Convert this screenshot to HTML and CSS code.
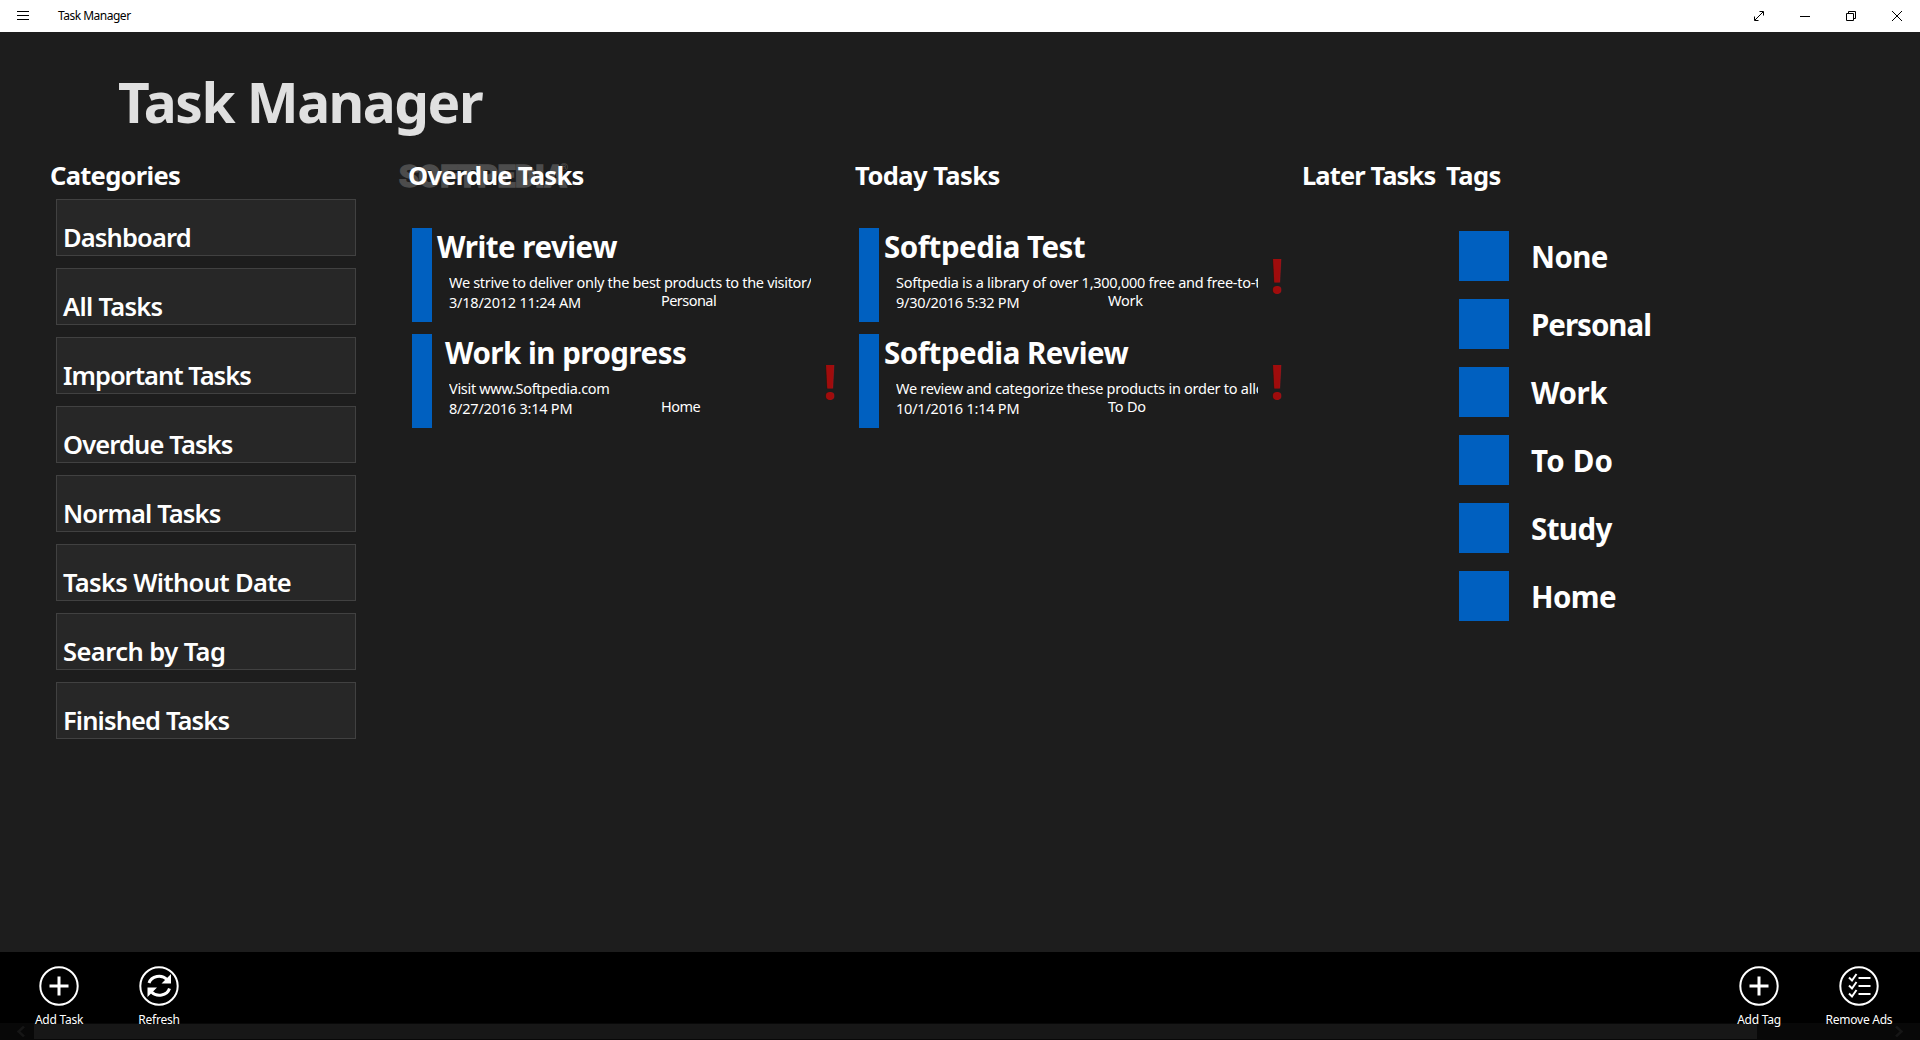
FILE: index.html
```html
<!DOCTYPE html>
<html lang="en">
<head>
<meta charset="utf-8">
<title>Task Manager</title>
<link rel="stylesheet" href="styles.css">
</head>
<body>
<header class="titlebar">
  <svg class="menu-icon" width="12" height="9" viewBox="0 0 12 9"><path d="M0 .5h12M0 4.5h12M0 8.5h12" stroke="#000" fill="none"/></svg>
  <span class="app-name">Task Manager</span>
  <div class="window-buttons">
    <svg width="10" height="10" viewBox="0 0 10 10"><path d="M.9 9.1 9.1.9M5.5.5h4v4M.5 5.5v4h4" stroke="#000" fill="none"/></svg>
    <svg width="10" height="10" viewBox="0 0 10 10"><path d="M0 5.5h10" stroke="#000"/></svg>
    <svg width="10" height="10" viewBox="0 0 10 10"><path d="M.5 2.5h7v7h-7zM2.5 2.5v-2h7v7h-2" stroke="#000" fill="none"/></svg>
    <svg width="10" height="10" viewBox="0 0 10 10"><path d="M0 0l10 10M10 0 0 10" stroke="#000"/></svg>
  </div>
</header>
<main class="page">
  <h1 class="page-title">Task Manager</h1>
  <div class="columns">
    <section class="categories">
      <h2 class="heading">Categories</h2>
      <nav class="category-list">
        <a class="category">Dashboard</a>
        <a class="category">All Tasks</a>
        <a class="category">Important Tasks</a>
        <a class="category">Overdue Tasks</a>
        <a class="category">Normal Tasks</a>
        <a class="category">Tasks Without Date</a>
        <a class="category">Search by Tag</a>
        <a class="category">Finished Tasks</a>
      </nav>
    </section>
    <section class="tasks">
      <span class="watermark">SOFTPEDIA<sup class="reg">®</sup></span>
      <h2 class="heading">Overdue Tasks</h2>
      <div class="task-list">
        <article class="task"><div class="task-body"><h3 class="task-title">Write review</h3><p class="task-note">We strive to deliver only the best products to the visitor/user</p><div class="task-meta"><span class="date">3/18/2012 11:24 AM</span><span class="tag-name">Personal</span></div></div></article>
        <article class="task"><div class="task-body"><h3 class="task-title shifted">Work in progress</h3><p class="task-note">Visit www.Softpedia.com</p><div class="task-meta"><span class="date">8/27/2016 3:14 PM</span><span class="tag-name">Home</span></div></div><span class="important">!</span></article>
      </div>
    </section>
    <section class="tasks today">
      <h2 class="heading">Today Tasks</h2>
      <div class="task-list">
        <article class="task"><div class="task-body"><h3 class="task-title">Softpedia Test</h3><p class="task-note">Softpedia is a library of over 1,300,000 free and free-to-try</p><div class="task-meta"><span class="date">9/30/2016 5:32 PM</span><span class="tag-name">Work</span></div></div><span class="important">!</span></article>
        <article class="task"><div class="task-body"><h3 class="task-title">Softpedia Review</h3><p class="task-note">We review and categorize these products in order to allow</p><div class="task-meta"><span class="date">10/1/2016 1:14 PM</span><span class="tag-name">To Do</span></div></div><span class="important">!</span></article>
      </div>
    </section>
    <section class="later"><h2 class="heading">Later Tasks</h2></section>
    <section class="tags">
      <h2 class="heading">Tags</h2>
      <ul class="tag-list">
        <li class="tag">None</li>
        <li class="tag">Personal</li>
        <li class="tag">Work</li>
        <li class="tag">To Do</li>
        <li class="tag">Study</li>
        <li class="tag">Home</li>
      </ul>
    </section>
  </div>
</main>
<footer class="appbar">
  <div class="group">
    <button class="command"><svg width="40" height="40" viewBox="0 0 40 40"><circle cx="20" cy="20" r="18.7"/><path class="thick" d="M10.5 20h19M20 10.5v19"/></svg><span>Add Task</span></button>
    <button class="command"><svg width="40" height="40" viewBox="0 0 40 40"><circle cx="20" cy="20" r="18.7"/><path class="thick" d="M10 17a10.500 9.500 0 0 1 18-3.500M30.500 22.500a10.500 9.500 0 0 1-18 3.500"/><path class="solid" d="M32 8v9.500h-9.500zM8.500 31v-9.500h9.500z"/></svg><span>Refresh</span></button>
  </div>
  <div class="group right">
    <button class="command"><svg width="40" height="40" viewBox="0 0 40 40"><circle cx="20" cy="20" r="18.7"/><path class="thick" d="M10.5 20h19M20 10.5v19"/></svg><span>Add Tag</span></button>
    <button class="command"><svg width="40" height="40" viewBox="0 0 40 40"><circle cx="20" cy="20" r="18.7"/><path d="M19.500 12h12M19.500 20h12M19.500 28h12M10 11.500l3 3 4.500-6.500M10 19.500l3 3 4.500-6.500M10 27.500l3 3 4.500-6.500"/></svg><span>Remove Ads</span></button>
  </div>
  <div class="scrollbar">
    <svg width="8" height="11" viewBox="0 0 8 11"><path d="M7 .5 1.500 5.500 7 10.500" fill="none" stroke="#161616" stroke-width="2.500"/></svg>
    <div class="thumb"></div>
    <svg width="8" height="11" viewBox="0 0 8 11"><path d="M1 .5 6.500 5.500 1 10.500" fill="none" stroke="#161616" stroke-width="2.500"/></svg>
  </div>
</footer>
</body>
</html>
```
FILE: styles.css
```css
* { box-sizing: border-box; margin: 0; padding: 0; }
body { width: 1920px; height: 1040px; display: flex; flex-direction: column; overflow: hidden; background: #1d1d1d; color: #fff; font-family: "Noto Sans", "Open Sans", sans-serif; }
.titlebar { height: 32px; background: #fff; color: #000; display: flex; align-items: center; padding: 0 18px 0 17px; font-size: 12px; }
.menu-icon { display: block; margin-top: -1px; }
.app-name { margin-left: 29px; line-height: 16px; letter-spacing: -0.5px; }
.window-buttons { margin-left: auto; display: flex; gap: 36px; }
.page { flex: 1; }
.page-title { padding: 33px 0 0 118px; height: 125px; font-size: 55px; line-height: 74px; color: #e0e0e0; letter-spacing: -1.5px; }
.columns { display: flex; }
.heading { position: relative; height: 42px; font-size: 25.500px; line-height: 36px; font-weight: 700; white-space: nowrap; letter-spacing: -0.7px; }
.categories { width: 358px; margin-left: 50px; }
.category-list { display: flex; flex-direction: column; gap: 12px; padding-left: 6px; }
.category { width: 300px; height: 57px; background: #272727; border: 1px solid #414141; padding: 19px 0 0 6px; font-size: 25.500px; line-height: 36px; font-weight: 600; letter-spacing: -0.87px; white-space: nowrap; }
.category:nth-child(2) { letter-spacing: -0.7px; }
.category:nth-child(3) { letter-spacing: -1px; }
.category:nth-child(6) { letter-spacing: -0.67px; }
.category:nth-child(7) { letter-spacing: -0.55px; }
.tasks { width: 447px; position: relative; }
.today .heading { letter-spacing: -0.55px; }
.watermark { position: absolute; left: -9px; top: 0; font: 900 32px/38px Roboto, sans-serif; color: #4c4c4c; -webkit-text-stroke: 1.500px #4c4c4c; letter-spacing: -0.5px; white-space: nowrap; }
.reg { font-size: 11px; line-height: 0; vertical-align: 16px; margin-left: -6px; -webkit-text-stroke: 0; }
.task-list { display: flex; flex-direction: column; gap: 12px; padding: 29px 0 0 4px; }
.task { height: 94px; width: 430px; display: flex; border-left: 20px solid #0060c0; }
.task-body { width: 379px; padding-left: 5px; margin-top: -1px; }
.task-title { height: 47px; font-size: 29.500px; line-height: 40px; font-weight: 700; letter-spacing: -0.5px; white-space: nowrap; }
.shifted { padding-left: 8px; }
.task-note { margin-left: 12px; width: 362px; overflow: hidden; white-space: nowrap; font-size: 14.500px; line-height: 20px; margin-top: -2px; letter-spacing: -0.31px; }
.today .task-note { letter-spacing: -0.26px; }
.task-meta { display: grid; grid-template-columns: 212px 1fr; padding-left: 12px; font-size: 14.500px; line-height: 20px; letter-spacing: -0.22px; }
.tag-name { margin-top: -2px; letter-spacing: -0.55px; }
.today .tag-name { letter-spacing: -0.2px; }
.important { padding: 20px 0 0 12px; font-size: 48px; line-height: 56px; font-weight: 700; color: #a00c0c; }
.later { width: 144px; }
.later .heading { letter-spacing: -0.9px; }
.tags .heading { letter-spacing: -0.5px; }
.tag-list { list-style: none; display: flex; flex-direction: column; gap: 18px; padding: 32px 0 0 13px; }
.tag { height: 50px; border-left: 50px solid #0060c0; padding: 6px 0 0 22px; font-size: 29.500px; line-height: 40px; font-weight: 700; white-space: nowrap; letter-spacing: -0.6px; }
.tag:nth-child(2) { letter-spacing: -1px; }
.tag:nth-child(3) { letter-spacing: -0.4px; }
.tag:nth-child(4) { letter-spacing: 0.2px; }
.appbar { height: 88px; background: #000; display: flex; justify-content: space-between; padding: 14px 11px 0 9px; position: relative; }
.group { display: flex; }
.right { position: relative; z-index: 1; }
.command { width: 100px; height: 74px; background: none; border: 0; color: #fff; font: 12px/16px "Noto Sans", sans-serif; letter-spacing: -0.25px; display: flex; flex-direction: column; align-items: center; gap: 6px; }
.command svg { fill: none; stroke: #fff; stroke-width: 2; }
.command .thick { stroke-width: 3; }
.command .solid { fill: #fff; stroke: none; }
.scrollbar { position: absolute; left: 0; right: 0; bottom: 0; height: 17px; display: flex; align-items: center; padding: 0 17px; background: rgba(255, 255, 255, .03); }
.thumb { height: 15px; width: 1723px; margin: 0 auto 0 9px; background: #171717; }
```
